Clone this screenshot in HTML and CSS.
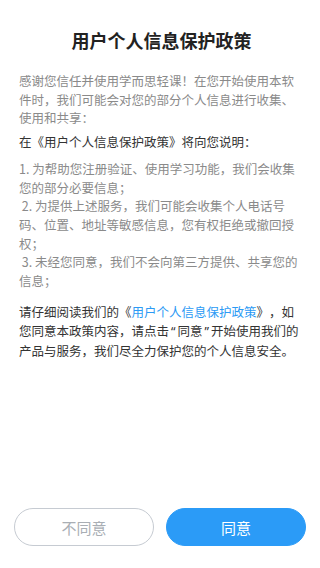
FILE: index.html
```html
<!DOCTYPE html>
<html lang="zh-CN">

<head>
    <meta charset="UTF-8">
    <meta name="viewport" content="width=device-width, initial-scale=1.0">
    <title>用户个人信息保护政策</title>
    <link rel="stylesheet" href="styles.css">
</head>

<body>
    <div class="page">
        <div class="content">
            <h1 class="title">用户个人信息保护政策</h1>
            <p class="intro">感谢您信任并使用学而思轻课！在您开始使用本软件时，我们可能会对您的部分个人信息进行收集、使用和共享：</p>
            <p class="lead">在《用户个人信息保护政策》将向您说明：</p>
            <p class="list">1. 为帮助您注册验证、使用学习功能，我们会收集您的部分必要信息；<br>&nbsp;2. 为提供上述服务，我们可能会收集个人电话号码、位置、地址等敏感信息，您有权拒绝或撤回授权；<br>&nbsp;3. 未经您同意，我们不会向第三方提供、共享您的信息；</p>
            <p class="lead">请仔细阅读我们的《<a class="link" href="#">用户个人信息保护政策</a>》，如您同意本政策内容，请点击<span class="q">“</span>同意<span class="q">”</span>开始使用我们的产品与服务，我们尽全力保护您的个人信息安全。</p>
        </div>
        <!-- 底部按钮 -->
        <div class="actions">
            <button class="btn btn-cancel">不同意</button>
            <button class="btn btn-ok">同意</button>
        </div>
    </div>
</body>

</html>
```

FILE: styles.css
```css
html,
body {
    margin: 0;
    padding: 0;
    width: 100%;
    height: 100%;
    background: #fff;
}

body {
    font-family: "Noto Sans CJK SC", "Noto Sans", sans-serif;
}

.page {
    height: 100%;
    display: flex;
    flex-direction: column;
    justify-content: space-between;
    box-sizing: border-box;
    padding-bottom: 22px;
}

.content {
    padding: 27px 16px 0 19px;
}

.title {
    margin: 0 0 19px;
    font-size: 18px;
    line-height: 26px;
    font-weight: bold;
    text-align: center;
    color: #222;
}

.content p {
    margin: 0;
    font-size: 12.5px;
    line-height: 18.7px;
    text-spacing-trim: space-all;
}

/* 引号用西文字体，避免全角 */
.q {
    font-family: "Noto Sans", sans-serif;
    padding: 0 2px;
}

.intro {
    color: #8a8a8a;
    margin-bottom: 5px !important;
}

.lead {
    color: #333;
}

.content .lead:nth-of-type(2) {
    margin-bottom: 8px;
}

.list {
    color: #8a8a8a;
    margin-bottom: 12.5px !important;
}

.link {
    color: #2b9af5;
    text-decoration: none;
}

.actions {
    display: flex;
    gap: 12px;
    padding: 0 14px;
}

.btn {
    flex: 1;
    height: 38px;
    border-radius: 19px;
    font-family: inherit;
    font-size: 15px;
    box-sizing: border-box;
    outline: none;
}

.btn-cancel {
    background: #fff;
    border: 1px solid #c6cbd2;
    color: #a9aeb4;
}

.btn-ok {
    background: #2b9bf7;
    border: 1px solid #2b9bf7;
    color: #fff;
}
```
